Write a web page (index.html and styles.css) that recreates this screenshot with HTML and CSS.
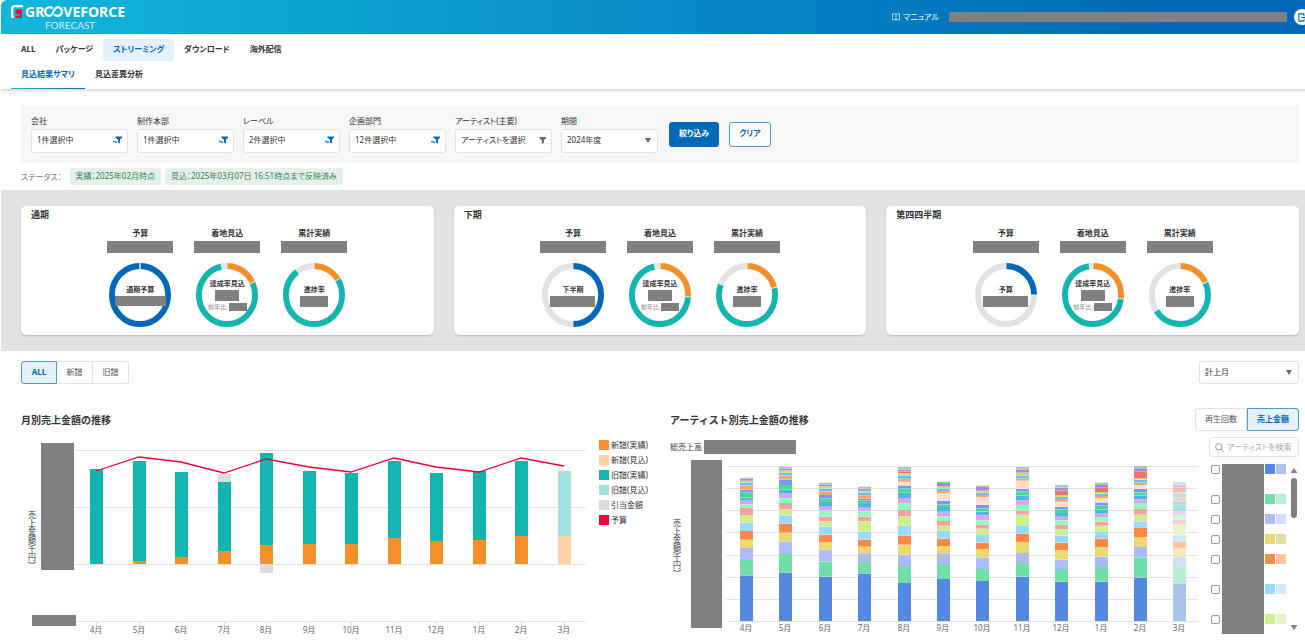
FILE: index.html
```html
<!DOCTYPE html>
<html lang="ja">
<head>
<meta charset="UTF-8" />
<meta name="viewport" content="width=device-width, initial-scale=1" />
<title>GROOVEFORCE FORECAST</title>
<link rel="stylesheet" href="styles.css">
</head>
<body>

<!-- Shared icons -->
<svg class="sprite" aria-hidden="true">
  <symbol id="filter-on" viewBox="0 0 9 8">
    <path d="M2.500 .5h6.500v1.300L6.900 3.600V7.500L4.900 6.500V3.600L2.500 1.800z"/>
    <circle cx="1" cy="5.600" r=".9"/>
    <circle cx="3" cy="6.200" r=".9"/>
  </symbol>
  <symbol id="filter-off" viewBox="0 0 9 8">
    <path d="M2.500 1h6.500v1.200L6.800 4.200V7.500H4.800V4.200L2.500 2.200z"/>
  </symbol>
</svg>

<header>
  <a href="#" class="logo">
    <span class="logo-name">
      <svg class="logo-mark" viewBox="0 0 12 14">
        <path d="M12 1.200H3.500Q1.200 1.200 1.200 3.500V12H3" fill="none" stroke="#fff" stroke-width="2.200"/>
        <path d="M4.500 4.500H11v8.500H4.500v-2.200H8.600V9H4.500z" fill="#e0103c"/>
      </svg>
      <span>GR</span><svg class="logo-loop" viewBox="0 0 19 11">
        <path d="M9 2.400C7.800 1.500 7 1.100 5.600 1.100a4.400 4.400 0 1 0 0 8.800c4 0 4.200-8.800 7.900-8.800a4.400 4.400 0 1 1 0 8.800c-1.300 0-2.200-.4-3.400-1.300" fill="none" stroke="#fff" stroke-width="2.200"/>
      </svg><span>VEFORCE</span>
    </span>
    <span class="logo-sub">FORECAST</span>
  </a>
  <div class="account">
    <a href="#" class="manual">
      <svg viewBox="0 0 9 8"><path d="M.5.5h3.500l.5.5.5-.5h3.500v6.500H5l-.5.5-.5-.5H.5zM4.500 1v6.500" fill="none" stroke="#fff" stroke-width=".8"/></svg>
      マニュアル
    </a>
    <span class="mask user"></span>
    <button class="logout" aria-label="ログアウト">
      <svg viewBox="0 0 10 10"><path d="M6.500 3V1H1v8h5.500V7M3.500 5H9.500M7.500 3l2 2-2 2" fill="none" stroke="#0068b7" stroke-width="1.200"/></svg>
    </button>
  </div>
</header>

<nav class="main-nav">
  <a href="#">ALL</a>
  <a href="#">パッケージ</a>
  <a href="#" class="active">ストリーミング</a>
  <a href="#">ダウンロード</a>
  <a href="#">海外配信</a>
</nav>
<nav class="sub-nav">
  <a href="#" class="active">見込結果サマリ</a>
  <a href="#">見込差異分析</a>
</nav>

<form class="filters">
  <div class="field">
    <label for="company">会社</label>
    <button type="button" id="company" class="picker">1件選択中<svg><use href="#filter-on"/></svg></button>
  </div>
  <div class="field">
    <label for="division">制作本部</label>
    <button type="button" id="division" class="picker">1件選択中<svg><use href="#filter-on"/></svg></button>
  </div>
  <div class="field">
    <label for="label">レーベル</label>
    <button type="button" id="label" class="picker">2件選択中<svg><use href="#filter-on"/></svg></button>
  </div>
  <div class="field">
    <label for="planning">企画部門</label>
    <button type="button" id="planning" class="picker">12件選択中<svg><use href="#filter-on"/></svg></button>
  </div>
  <div class="field">
    <label for="artist">アーティスト(主要)</label>
    <button type="button" id="artist" class="picker empty">アーティストを選択<svg><use href="#filter-off"/></svg></button>
  </div>
  <div class="field">
    <label for="period">期間</label>
    <div class="select"><select id="period"><option>2024年度</option></select></div>
  </div>
  <div class="filter-actions">
    <button type="submit" class="btn btn-primary">絞り込み</button>
    <button type="reset" class="btn">クリア</button>
  </div>
</form>

<div class="status">
  <span class="status-label">ステータス：</span>
  <span class="chip">実績：2025年02月時点</span>
  <span class="chip">見込：2025年03月07日 16:51時点まで反映済み</span>
</div>

<section class="summary">
  <article class="card">
    <h2>通期</h2>
    <div class="metrics">
      <div class="metric">
        <h3>予算</h3>
        <span class="mask amount"></span>
        <div class="donut" data-colors="blue" data-stops="100">
          <div class="donut-text"><b>通期予算</b><span class="mask wide"></span></div>
        </div>
      </div>
      <div class="metric">
        <h3>着地見込</h3>
        <span class="mask amount"></span>
        <div class="donut" data-colors="orange,teal" data-stops="18,97">
          <div class="donut-text"><b>達成率見込</b><span class="mask rate"></span><small>前年比:<span class="mask yoy"></span></small></div>
        </div>
      </div>
      <div class="metric">
        <h3>累計実績</h3>
        <span class="mask amount"></span>
        <div class="donut" data-colors="orange,teal" data-stops="16,90">
          <div class="donut-text"><b>進捗率</b><span class="mask progress"></span></div>
        </div>
      </div>
    </div>
  </article>

  <article class="card">
    <h2>下期</h2>
    <div class="metrics">
      <div class="metric">
        <h3>予算</h3>
        <span class="mask amount"></span>
        <div class="donut" data-colors="blue" data-stops="50">
          <div class="donut-text"><b>下半期</b><span class="mask half"></span></div>
        </div>
      </div>
      <div class="metric">
        <h3>着地見込</h3>
        <span class="mask amount"></span>
        <div class="donut" data-colors="orange,teal" data-stops="26,97">
          <div class="donut-text"><b>達成率見込</b><span class="mask rate"></span><small>前年比:<span class="mask yoy"></span></small></div>
        </div>
      </div>
      <div class="metric">
        <h3>累計実績</h3>
        <span class="mask amount"></span>
        <div class="donut" data-colors="orange,teal" data-stops="21,81">
          <div class="donut-text"><b>進捗率</b><span class="mask progress"></span></div>
        </div>
      </div>
    </div>
  </article>

  <article class="card">
    <h2>第四四半期</h2>
    <div class="metrics">
      <div class="metric">
        <h3>予算</h3>
        <span class="mask amount"></span>
        <div class="donut" data-colors="blue" data-stops="25">
          <div class="donut-text"><b>予算</b><span class="mask half"></span></div>
        </div>
      </div>
      <div class="metric">
        <h3>着地見込</h3>
        <span class="mask amount"></span>
        <div class="donut" data-colors="orange,teal" data-stops="27,98">
          <div class="donut-text"><b>達成率見込</b><span class="mask rate"></span><small>前年比:<span class="mask yoy"></span></small></div>
        </div>
      </div>
      <div class="metric">
        <h3>累計実績</h3>
        <span class="mask amount"></span>
        <div class="donut" data-colors="orange,teal" data-stops="18,66">
          <div class="donut-text"><b>進捗率</b><span class="mask progress"></span></div>
        </div>
      </div>
    </div>
  </article>
</section>

<div class="toolbar">
  <div class="toggle">
    <button class="active">ALL</button>
    <button>新譜</button>
    <button>旧譜</button>
  </div>
  <div class="select month-type"><select aria-label="集計月"><option>計上月</option></select></div>
</div>

<div class="charts">
  <section>
    <div class="chart-head">
      <h2>月別売上金額の推移</h2>
    </div>
    <div class="chart-body monthly">
      <svg id="monthly" viewBox="0 0 565 200"></svg>
      <ul class="legend">
        <li><i class="new"></i>新譜(実績)</li>
        <li><i class="new-plan"></i>新譜(見込)</li>
        <li><i class="old"></i>旧譜(実績)</li>
        <li><i class="old-plan"></i>旧譜(見込)</li>
        <li><i class="reserve"></i>引当金額</li>
        <li><i class="budget"></i>予算</li>
      </ul>
    </div>
  </section>

  <section>
    <div class="chart-head">
      <h2>アーティスト別売上金額の推移</h2>
      <div class="toggle large">
        <button>再生回数</button>
        <button class="active">売上金額</button>
      </div>
    </div>
    <div class="chart-body artists">
      <div class="chart-main">
        <div class="total">総売上高<span class="mask"></span></div>
        <svg id="artists" viewBox="0 0 529 178"></svg>
      </div>
      <aside>
        <div class="search">
          <svg viewBox="0 0 9 9"><circle cx="3.800" cy="3.800" r="3.200"/><path d="M6.200 6.200L8.500 8.500"/></svg>
          <input type="text" placeholder="アーティストを検索" aria-label="アーティストを検索">
        </div>
        <div class="artist-list">
          <ul id="artist-items"></ul>
          <div class="scrollbar"><i class="up"></i><i class="thumb"></i><i class="down"></i></div>
        </div>
      </aside>
    </div>
  </section>
</div>

<script src="charts.js"></script>
</body>
</html>
```
FILE: styles.css
```css
/* Basic Reset */
* {
  margin: 0; padding: 0; box-sizing: border-box;
}
body {
  font-family: "Noto Sans", "Noto Sans CJK JP", sans-serif;
  font-size: 8px;
  line-height: 12px;
  font-feature-settings: "palt";
  background: #fff;
  color: #333;
  padding-left: 1px;
  overflow-x: hidden;
}
button, input, select {
  font: inherit;
  font-feature-settings: inherit;
  color: inherit;
}
button {
  cursor: pointer;
}
a {
  color: inherit;
  text-decoration: none;
}
ul {
  list-style: none;
}
.sprite {
  position: absolute;
  width: 0;
  height: 0;
}
.mask {
  display: block;
  background: #808080;
}
/* Header */
header {
  display: flex;
  justify-content: space-between;
  height: 34px;
  padding-left: 10px;
  background: linear-gradient(90deg, #12b8da, #0068b7 90%);
  border-radius: 6px 0 0 0;
  color: #fff;
  overflow: hidden;
}
.logo {
  padding-top: 4px;
}
.logo-name {
  display: flex;
  align-items: center;
  height: 15px;
  font-size: 14px;
  font-weight: bold;
}
.logo-mark {
  width: 12px;
  height: 14px;
  margin-right: 2px;
}
.logo-loop {
  width: 19px;
  height: 11px;
}
.logo-sub {
  display: block;
  padding-left: 34px;
  font-family: Lato, sans-serif;
  font-size: 10px;
  opacity: 0.8;
}
.account {
  display: flex;
  align-items: center;
  margin-right: -5px;
}
.manual {
  display: flex;
  align-items: center;
  gap: 3px;
}
.manual svg {
  width: 8px;
  height: 8px;
}
.user {
  width: 338px;
  height: 10px;
  margin: 0 7px 0 10px;
}
.logout {
  display: flex;
  align-items: center;
  justify-content: center;
  width: 16px;
  height: 16px;
  border: 0;
  border-radius: 50%;
  background: #fff;
}
.logout svg {
  width: 9px;
  height: 9px;
}
/* Navigation */
.main-nav, .sub-nav {
  display: flex;
  padding: 0 10px;
  font-weight: bold;
}
.main-nav {
  padding-top: 5px;
}
.main-nav a {
  padding: 4px 10px 6px;
  border-radius: 3px;
}
.main-nav .active {
  background: #e3f2fd;
  color: #0068b7;
}
.sub-nav {
  border-bottom: 2px solid #e2e2e2;
  box-shadow: 0 1px 1px #f4f4f4;
}
.sub-nav a {
  height: 28px;
  padding: 7px 10px 0;
}
.sub-nav .active {
  color: #0068b7;
  border-bottom: 1px solid #0068b7;
  border-image: linear-gradient(90deg, #12b8da, #0068b7) 1;
}
/* Filters */
.filters {
  display: flex;
  align-items: center;
  margin: 14px 6px 0 20px;
  padding: 10px;
  background: #f7f7f7;
}
.field {
  width: 97px;
  margin-right: 9px;
}
.field label {
  display: block;
  margin-bottom: 2px;
}
.picker, .select select {
  display: flex;
  align-items: center;
  justify-content: space-between;
  width: 100%;
  height: 24px;
  padding: 0 5px 2px;
  background: #fff;
  border: 1px solid #e2e2e2;
  border-radius: 3px;
  white-space: nowrap;
}
.picker svg {
  flex: none;
  width: 9px;
  height: 8px;
  fill: #0068b7;
}
.picker.empty svg {
  fill: #666;
}
.select {
  position: relative;
}
.select select {
  appearance: none;
}
.select::after {
  content: "";
  position: absolute;
  right: 7px;
  top: 9px;
  width: 6px;
  height: 5px;
  background: #666;
  clip-path: polygon(0 0, 100% 0, 50% 100%);
  pointer-events: none;
}
.filter-actions {
  display: flex;
  gap: 10px;
  margin-left: 2px;
}
.btn {
  height: 25px;
  padding: 0 9px 2px;
  border: 1px solid #4a9ad4;
  border-radius: 3px;
  background: #fff;
  color: #0068b7;
  font-weight: bold;
}
.btn-primary {
  background: #0068b7;
  border-color: #0068b7;
  color: #fff;
}
.status {
  display: flex;
  align-items: center;
  margin: 5px 20px;
  color: #777;
}
.status-label {
  margin-right: 4px;
}
.chip {
  height: 17px;
  margin-left: 4px;
  padding: 2px 6px;
  border-radius: 3px;
  background: #e6f0ea;
  color: #2f8055;
}
/* Summary cards */
.summary {
  display: grid;
  grid-template-columns: repeat(3, 1fr);
  gap: 20px;
  padding: 16px 6px 16px 20px;
  background: #e2e2e2;
}
.card {
  padding: 3px 10px 8px;
  background: #fff;
  border-radius: 5px;
  box-shadow: 0 1px 2px rgba(0,0,0,0.2);
}
.card h2 {
  font-size: 9px;
  margin-bottom: 6px;
}
.metrics {
  display: flex;
  justify-content: center;
}
.metric {
  display: flex;
  flex-direction: column;
  align-items: center;
  width: 87px;
}
.metric h3 {
  font-size: 8px;
  margin-bottom: 2px;
}
.amount {
  width: 66px;
  height: 12px;
  margin-bottom: 10px;
}
.donut {
  position: relative;
  width: 62px;
  height: 64px;
}
.donut svg {
  display: block;
  width: 100%;
  height: 100%;
}
.donut-text {
  position: absolute;
  inset: 0;
  display: flex;
  flex-direction: column;
  align-items: center;
  justify-content: center;
  font-size: 7px;
  white-space: nowrap;
}
.donut-text small {
  display: flex;
  align-items: center;
  gap: 1px;
  font-size: 6px;
  color: #888;
}
.wide {
  width: 51px;
  height: 10px;
}
.half {
  width: 45px;
  height: 11px;
}
.rate {
  width: 24px;
  height: 11px;
}
.yoy {
  width: 18px;
  height: 8px;
}
.progress {
  width: 28px;
  height: 11px;
}
/* Toolbar */
.toolbar {
  display: flex;
  justify-content: space-between;
  margin: 10px 6px 24px 20px;
}
.toggle {
  display: flex;
}
.toggle button {
  width: 36px;
  height: 23px;
  padding-bottom: 1px;
  background: #fff;
  border: 1px solid #e2e2e2;
  border-left-width: 0;
  color: #555;
}
.toggle button:first-child {
  border-left-width: 1px;
  border-radius: 3px 0 0 3px;
}
.toggle button:last-child {
  border-radius: 0 3px 3px 0;
}
.toggle .active {
  background: #e3f2fd;
  border: 1px solid #4a9ad4;
  color: #0068b7;
  font-weight: bold;
}
.toggle.large button {
  width: 52px;
}
.month-type {
  width: 100px;
}
.month-type select {
  height: 23px;
}
/* Charts */
.charts {
  display: grid;
  grid-template-columns: 1fr 1fr;
  gap: 20px;
  margin: 0 6px 0 20px;
}
.chart-head {
  display: flex;
  align-items: center;
  justify-content: space-between;
  height: 23px;
  margin-bottom: 6px;
}
.chart-head h2 {
  font-size: 10px;
  font-feature-settings: normal;
}
.chart-body {
  display: flex;
  align-items: flex-start;
}
.monthly {
  gap: 13px;
}
.artists {
  gap: 10px;
}
.chart-body > svg, .chart-main {
  flex: 1;
  min-width: 0;
}
.chart-main svg {
  display: block;
  width: 100%;
}
.legend {
  width: 51px;
  white-space: nowrap;
}
.legend li {
  display: flex;
  align-items: center;
  gap: 2px;
  height: 15px;
}
.legend i {
  width: 10px;
  height: 10px;
}
.new { background: #f58f29; }
.new-plan { background: #fcd2a9; }
.old { background: #13b5b1; }
.old-plan { background: #a1e1e0; }
.reserve { background: #dcdcdc; }
.budget { background: #eb0037; }

.total {
  display: flex;
  align-items: center;
  gap: 2px;
  height: 20px;
  padding-bottom: 1px;
}
.total .mask {
  width: 92px;
  height: 14px;
}
.axis {
  fill: #666;
  text-anchor: middle;
}
.axis-title {
  writing-mode: vertical-rl;
  fill: #333;
}
/* Artist list */
aside {
  width: 90px;
}
.search {
  display: flex;
  align-items: center;
  gap: 3px;
  height: 20px;
  padding: 0 1px 0 5px;
  border: 1px solid #e2e2e2;
  border-radius: 3px;
}
.search svg {
  flex: none;
  width: 9px;
  height: 9px;
  fill: none;
  stroke: #999;
}
.search input {
  width: 100%;
  min-width: 0;
  border: 0;
  outline: 0;
}
.search input::placeholder {
  color: #aaa;
}
.artist-list {
  display: flex;
  justify-content: space-between;
  margin-top: 7px;
}
.artist-list li {
  display: flex;
  height: 20px;
  padding-left: 2px;
}
.artist-list .tall {
  height: 30px;
}
.artist-list input {
  appearance: none;
  width: 9px;
  height: 9px;
  margin: 1px 2px 0 0;
  border: 1px solid #999;
  border-radius: 2px;
}
.artist-list .mask {
  width: 42px;
  margin-right: 1px;
}
.swatch {
  width: 10px;
  height: 10px;
  margin-right: 1px;
}
.scrollbar {
  display: flex;
  flex-direction: column;
  align-items: center;
  width: 10px;
  padding: 4px 0;
}
.up, .down {
  width: 7px;
  height: 5px;
  background: #808080;
  clip-path: polygon(0 100%, 50% 0, 100% 100%);
}
.thumb {
  width: 6px;
  height: 40px;
  margin-top: 5px;
  border-radius: 3px;
  background: #808080;
}
.down {
  margin-top: auto;
  clip-path: polygon(0 0, 100% 0, 50% 100%);
}
```
FILE: charts.js
```js
const months = ['4月', '5月', '6月', '7月', '8月', '9月', '10月', '11月', '12月', '1月', '2月', '3月'];

function rect(x, y, w, h, fill, extra = '') {
  return `<rect x="${x}" y="${y}" width="${w}" height="${h}" fill="${fill}" ${extra}/>`;
}

function line(x1, y1, x2, y2) {
  return `<path d="M${x1} ${y1}L${x2} ${y2}" stroke="#e2e2e2"/>`;
}

// Donuts: stops are cumulative percentages
const donutColors = { blue: '#0068b7', orange: '#f58f29', teal: '#13b5b1' };

document.querySelectorAll('.donut').forEach(donut => {
  const colors = donut.dataset.colors.split(',');
  const stops = donut.dataset.stops.split(',').map(Number);
  const ring = (color, from, to) =>
    `<circle cx="32" cy="32" r="29" fill="none" stroke="${color}" stroke-width="6" pathLength="100"
      stroke-dasharray="${to - from} 100" stroke-dashoffset="${-from}" transform="rotate(-90 32 32)"/>`;
  let svg = ring('#e2e2e2', 0, 100);
  let from = 0;
  stops.forEach((to, i) => {
    svg += ring(donutColors[colors[i]], from, to);
    from = to;
  });
  // thin gap between the parts
  [0, ...stops].forEach(stop => {
    svg += `<path d="M32 0V6" stroke="#fff" stroke-width=".8" transform="rotate(${stop * 3.6} 32 32)"/>`;
  });
  donut.insertAdjacentHTML('afterbegin', `<svg viewBox="0 0 64 64" preserveAspectRatio="none">${svg}</svg>`);
});

// Monthly sales: [top of old, top of new, budget]
const monthly = [
  [32, 127, 34], [24, 124, 20], [35, 120, 25], [45, 114, 36], [16, 108, 22], [34, 107, 30],
  [36, 107, 35], [24, 101, 21], [36, 104, 30], [34, 103, 35], [24, 99, 21], [34, 99, 29]
];

function drawMonthly() {
  const base = 127;
  const x = i => Math.round(75 + i * 42.5);
  let svg = '';
  [13, 70, 127, 184].forEach(y => svg += line(54, y + .5, 565, y + .5));
  monthly.forEach(([old, fresh], i) => {
    const plan = i === 11;
    svg += rect(x(i) - 6, old, 13, fresh - old, plan ? '#a1e1e0' : '#13b5b1');
    svg += rect(x(i) - 6, fresh, 13, base - fresh, plan ? '#fcd2a9' : '#f58f29');
    svg += line(x(i) + .5, 185, x(i) + .5, 189);
    svg += `<text class="axis" x="${x(i)}" y="196">${months[i]}</text>`;
  });
  svg += rect(x(3) - 6, 37, 13, 8, '#dcdcdc');
  svg += rect(x(4) - 6, base + 1, 13, 8, '#dcdcdc');
  const points = monthly.map((m, i) => `${x(i)},${m[2]}`).join(' ');
  svg += `<polyline points="${points}" fill="none" stroke="#eb0037" stroke-width="1.3"/>`;
  svg += rect(20, 6, 33, 127, '#808080');
  svg += rect(11, 178, 44, 11, '#808080');
  svg += '<text class="axis-title" x="11" y="74">売上金額(千円)</text>';
  document.getElementById('monthly').innerHTML = svg;
}

// Artist sales: edges of each stacked part, bottom to top, three units to a pixel
const palette = [
  '#5588e0', '#70dfa8', '#aabbff', '#e8da70', '#ff8844', '#99d8ff', '#ccf090', '#f4a0a4', '#90ffbb', '#d8a4f8',
  '#50b4e0', '#44dd8c', '#7898ff', '#ffe0c4', '#ffa470', '#60c4ff', '#c8dc60', '#f47070', '#a884e8', '#a8c8b0'
];
const artists = [
  [527, 481, 445, 420, 394, 369, 346, 325, 314, 303, 293, 279, 270, 270, 257, 249, 243, 243, 237, 234],
  [518, 463, 425, 399, 372, 347, 329, 310, 295, 282, 269, 256, 239, 239, 227, 219, 212, 212, 207, 201],
  [531, 485, 450, 428, 405, 380, 365, 350, 333, 321, 307, 297, 286, 286, 275, 266, 260, 260, 255, 249],
  [521, 490, 463, 441, 420, 396, 364, 351, 335, 324, 313, 303, 297, 297, 288, 279, 273, 273, 267, 261],
  [550, 502, 465, 435, 408, 378, 350, 331, 310, 295, 279, 267, 257, 246, 237, 227, 221, 215, 210, 202],
  [538, 496, 463, 439, 417, 393, 378, 364, 350, 336, 322, 314, 303, 280, 274, 266, 260, 256, 250, 246],
  [544, 508, 474, 448, 429, 406, 387, 375, 362, 347, 335, 326, 315, 292, 286, 279, 275, 272, 262, 258],
  [531, 490, 460, 428, 402, 379, 345, 332, 316, 302, 288, 276, 267, 243, 236, 228, 221, 218, 210, 202],
  [546, 508, 480, 451, 429, 407, 388, 375, 362, 351, 340, 329, 321, 306, 298, 291, 286, 273, 264, 256],
  [546, 502, 471, 442, 416, 397, 378, 365, 352, 340, 329, 318, 308, 296, 289, 282, 277, 264, 256, 249],
  [533, 473, 442, 412, 385, 365, 345, 328, 312, 299, 287, 278, 267, 256, 249, 240, 235, 216, 208, 199],
  [551, 502, 472, 446, 425, 408, 375, 361, 346, 335, 325, 315, 305, 304, 293, 283, 277, 263, 255, 247]
];

function drawArtists() {
  const x = i => Math.round(76 + i * 39.4);
  const y = edge => (edge - 664) / 3 + 164;
  let svg = '';
  for (let i = 0; i < 8; i++) {
    const gy = Math.round(9 + i * 22.15) + .5;
    svg += line(56, gy, 528, gy);
  }
  artists.forEach((edges, i) => {
    let bottom = 664;
    edges.forEach((edge, n) => {
      const h = (bottom - edge) / 3;
      svg += rect(x(i) - 6, y(edge), 13, h, '#fff');
      svg += rect(x(i) - 6, y(edge), 13, h, palette[n], i === 11 ? 'opacity=".5"' : '');
      bottom = edge;
    });
    svg += `<text class="axis" x="${x(i)}" y="174">${months[i]}</text>`;
  });
  svg += rect(21, 3, 31, 168, '#808080');
  svg += '<text class="axis-title" x="7" y="62">売上金額(千円)</text>';
  document.getElementById('artists').innerHTML = svg;
}

// Artist list: [actual, forecast, tall row]
const rows = [
  ['#5588e0', '#aac3f0', true], ['#70dfa8', '#b7efd3'], ['#aabbff', '#d4ddff'], ['#e8da70', '#e4dca8'],
  ['#ff8844', '#ffc3a1', true], ['#99d8ff', '#ccebff', true], ['#ccf090', '#e5f7c7']
];

document.getElementById('artist-items').innerHTML = rows.map(([actual, plan, tall], i) => `
  <li class="${tall ? 'tall' : ''}">
    <input type="checkbox" aria-label="アーティスト${i + 1}">
    <span class="mask"></span>
    <span class="swatch" style="background:${actual}"></span>
    <span class="swatch" style="background:${plan}"></span>
  </li>`).join('');

drawMonthly();
drawArtists();
```
